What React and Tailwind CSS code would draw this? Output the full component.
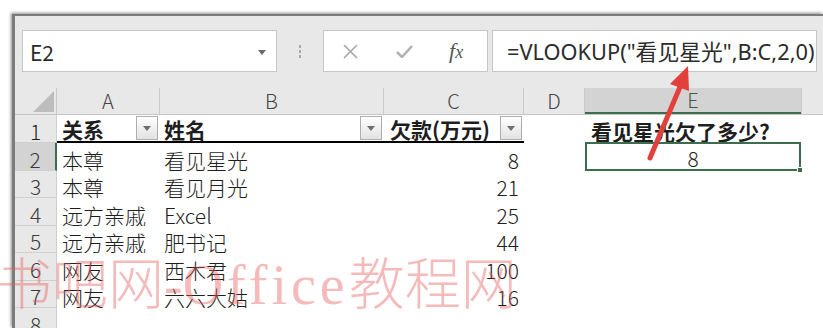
import React from 'react';

const rows = [
  { n: 2, a: '本尊', b: '看见星光', c: '8', e: '8' },
  { n: 3, a: '本尊', b: '看见月光', c: '21' },
  { n: 4, a: '远方亲戚', b: 'Excel', c: '25' },
  { n: 5, a: '远方亲戚', b: '肥书记', c: '44' },
  { n: 6, a: '网友', b: '西木君', c: '100' },
  { n: 7, a: '网友', b: '六六大姑', c: '16' },
  { n: 8, a: '', b: '', c: '' },
];

function FilterButton() {
  return (
    <span className="ml-auto mr-[2px] mb-[1px] flex h-[24px] w-[22px] shrink-0 items-center justify-center border border-[#adadad] bg-gradient-to-b from-white to-[#e2e2e2]">
      <svg width="8" height="5" viewBox="0 0 8 5">
        <path d="M0 0h8L4 5z" fill="#6f6f6f" />
      </svg>
    </span>
  );
}

function FormulaBar() {
  return (
    <div className="flex h-[72px] items-start pl-[7px] pt-[14px]">
      <div className="flex h-[42px] w-[255px] items-center border border-[#c6c6c6] bg-white pl-[7px] pr-[10px] pt-[2px]">
        <span className="text-[21px] leading-none text-[#2b2b2b]">E2</span>
        <svg className="ml-auto" width="8" height="5" viewBox="0 0 8 5">
          <path d="M0 0h8L4 5z" fill="#6a6a6a" />
        </svg>
      </div>
      <div className="flex h-[42px] w-[46px] flex-col items-center justify-center gap-[2px]">
        <span className="h-[3px] w-[2px] bg-[#a9a9a9]" />
        <span className="h-[3px] w-[2px] bg-[#a9a9a9]" />
        <span className="h-[3px] w-[2px] bg-[#a9a9a9]" />
      </div>
      <div className="flex h-[42px] w-[165px] items-center border border-[#c6c6c6] bg-white pl-[19px]">
        <svg width="15" height="15" viewBox="0 0 15 15">
          <path d="M1 1l13 13M14 1L1 14" stroke="#a6a6a6" strokeWidth="1.6" />
        </svg>
        <svg className="ml-[38px]" width="17" height="13" viewBox="0 0 17 13">
          <path d="M1 7l5 5L16 1" fill="none" stroke="#b3b3b3" strokeWidth="2.6" />
        </svg>
        <span className="ml-[36px] font-['Liberation_Serif',serif] text-[22px] italic leading-none text-[#555]">
          f<span className="text-[18px]">x</span>
        </span>
      </div>
      <div className="ml-[4px] flex h-[42px] w-[325px] items-center border border-[#c6c6c6] bg-white pl-[14px] pt-[2px]">
        <span className="whitespace-nowrap font-['Noto_Sans','Noto_Sans_CJK_SC',sans-serif] text-[21.8px] leading-none text-[#2b2b2b]">
          =VLOOKUP("看见星光",B:C,2,0)
        </span>
      </div>
    </div>
  );
}

function Sheet() {
  const cols = 'grid grid-cols-[42px_103px_224px_140px_61px_216px_1fr]';
  return (
    <div className="text-[21px] leading-none text-[#1e1e1e]">
      <div className={`${cols} h-[27px] border-b border-[#c4c4c4]`}>
        <div className="flex items-end justify-end border-r border-[#c8c8c8] pb-[2px] pr-[2px]">
          <svg width="21" height="21" viewBox="0 0 21 21">
            <path d="M21 0V21H0z" fill="#bdbdbd" />
          </svg>
        </div>
        {['A', 'B', 'C', 'D'].map((l) => (
          <div key={l} className="flex items-center justify-center border-r border-[#cacaca] font-light text-[20px] text-[#444]">
            {l}
          </div>
        ))}
        <div className="flex items-center justify-center border-b-2 border-[#3c6e4e] bg-[#d3d3d3] font-light text-[20px] text-[#3f5f4a]">
          E
        </div>
        <div className="border-l border-[#cacaca]" />
      </div>

      <div className={`${cols} h-[28px]`}>
        <div className="flex items-end justify-center border-b border-r border-[#cfcfcf] font-light">1</div>
        <div className="flex items-end border-b-2 border-black bg-white pl-[5px] font-bold">
          <span className="pb-[1px]">关系</span>
          <FilterButton />
        </div>
        <div className="flex items-end border-b-2 border-black bg-white pl-[4px] font-bold">
          <span className="pb-[1px]">姓名</span>
          <FilterButton />
        </div>
        <div className="flex items-end border-b-2 border-black bg-white pl-[6px] font-bold">
          <span className="pb-[1px]">欠款(万元)</span>
          <FilterButton />
        </div>
        <div className="bg-white" />
        <div className="flex items-end bg-white pb-[1px] pl-[6px] font-bold">看见星光欠了多少?</div>
        <div className="bg-white" />
      </div>

      {rows.map((r) => (
        <div key={r.n} className={`${cols} h-[27.5px]`}>
          <div
            className={
              r.n === 2
                ? 'flex items-end justify-center border-b border-r-2 border-b-[#cfcfcf] border-r-[#3c6e4e] bg-[#d3d3d3] font-light text-[#3a3a3a]'
                : 'flex items-end justify-center border-b border-r border-[#cfcfcf] font-light text-[#3a3a3a]'
            }
          >
            {r.n}
          </div>
          <div className="flex items-end bg-white pl-[5px] font-light">{r.a}</div>
          <div className="flex items-end bg-white pl-[4px] font-light">{r.b}</div>
          <div className="flex items-end justify-end bg-white pr-[5px] font-light">{r.c}</div>
          <div className="bg-white" />
          {r.e ? (
            <div className="relative -mt-[1px] flex items-end justify-center border-2 border-[#3c6e4e] bg-white font-light">
              {r.e}
              <span className="absolute -bottom-[4px] -right-[4px] h-[6px] w-[6px] border border-white bg-[#3c6e4e]" />
            </div>
          ) : (
            <div className="bg-white" />
          )}
          <div className="bg-white" />
        </div>
      ))}
    </div>
  );
}

export default function App() {
  return (
    <div className="relative h-[328px] w-[823px] overflow-hidden bg-white font-['Noto_Sans_CJK_SC',sans-serif]">
      <div className="ml-[12px] mt-[14px] h-[314px] border-l-[3px] border-t-[2px] border-[#7c7c7c] bg-[#e8e8e8] shadow-[-1px_-1px_3px_rgba(0,0,0,0.45)]">
        <FormulaBar />
        <Sheet />
      </div>

      <svg className="pointer-events-none absolute left-0 top-0" width="823" height="328" viewBox="0 0 823 328">
        <line x1="650" y1="158" x2="680" y2="87" stroke="#e2413b" strokeWidth="5" strokeLinecap="round" />
        <polygon points="688,66 670,84 689,91" fill="#e2413b" />
      </svg>

      <div className="pointer-events-none absolute left-[-4px] top-[257px] whitespace-nowrap font-['Liberation_Serif','Noto_Sans_CJK_SC',serif] text-[56px] font-light leading-none text-[rgba(232,92,92,0.42)]">
        书吧网-<span className="tracking-[4px]">Office</span>教程网
      </div>
    </div>
  );
}
